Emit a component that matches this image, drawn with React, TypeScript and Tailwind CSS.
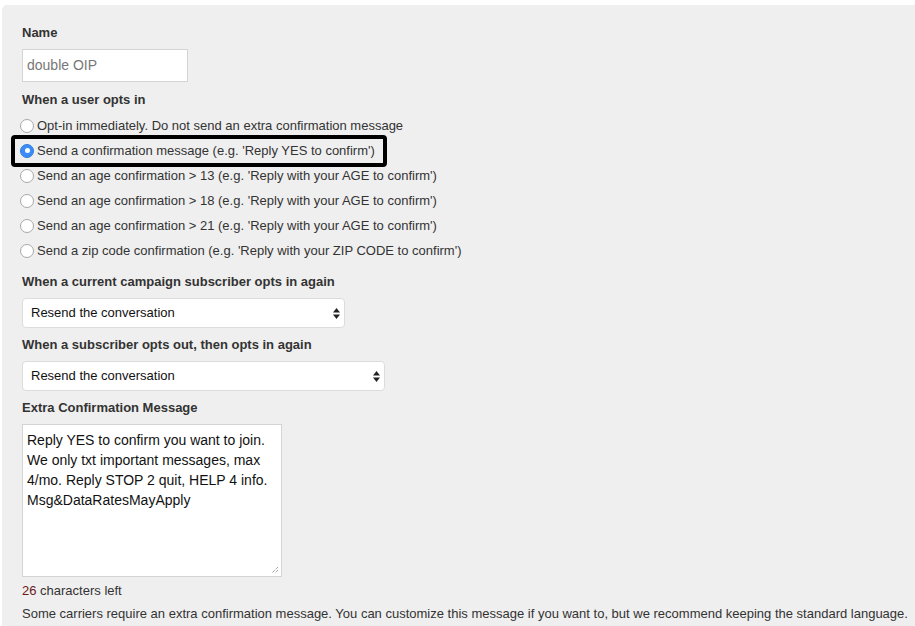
import React from "react";

const options = [
  "Opt-in immediately. Do not send an extra confirmation message",
  "Send a confirmation message (e.g. 'Reply YES to confirm')",
  "Send an age confirmation > 13 (e.g. 'Reply with your AGE to confirm')",
  "Send an age confirmation > 18 (e.g. 'Reply with your AGE to confirm')",
  "Send an age confirmation > 21 (e.g. 'Reply with your AGE to confirm')",
  "Send a zip code confirmation (e.g. 'Reply with your ZIP CODE to confirm')",
];

function Radio({ checked }: { checked: boolean }) {
  return checked ? (
    <span className="w-[14px] h-[14px] rounded-full bg-[#3b8df5] border border-[#2f7de0] flex items-center justify-center shrink-0">
      <span className="w-[5px] h-[5px] rounded-full bg-white" />
    </span>
  ) : (
    <span className="w-[14px] h-[14px] rounded-full bg-white border border-[#a9a9a9] shrink-0" />
  );
}

function SelectBox({ width }: { width: string }) {
  return (
    <div className={`${width} h-[30px] bg-white border border-[#dcdcdc] rounded-[4px] flex items-center justify-between pl-[8px] pr-[4px] text-[13px] text-[#111]`}>
      <span>Resend the conversation</span>
      <svg width="7" height="11" viewBox="0 0 7 11">
        <path d="M3.5 0 L7 4.5 H0 Z" fill="#222" />
        <path d="M3.5 11 L7 6.5 H0 Z" fill="#222" />
      </svg>
    </div>
  );
}

export default function App() {
  return (
    <div className="w-[915px] h-[626px] bg-white pt-[5px] pl-[2px] overflow-hidden" style={{ fontFamily: '"Liberation Sans", Arial, sans-serif' }}>
      <div className="h-[700px] bg-[#efefef] rounded-tl-[5px] pl-[20px] pt-[20px] text-[#333]">
        <div className="text-[13px] font-bold leading-[15px]">Name</div>
        <div className="mt-[9px] w-[166px] h-[33px] bg-white border border-[#d4d4d4] flex items-center pl-[4px] text-[14px] text-[#777]">
          double OIP
        </div>
        <div className="mt-[10px] text-[13px] font-bold leading-[15px]">When a user opts in</div>
        <div className="mt-[6px] flex flex-col">
          {options.map((o, i) => (
            <div key={i} className="h-[25px] flex items-center">
              {i === 1 ? (
                <div className="-ml-[11px] pl-[5px] pr-[8px] h-[32px] border-[4px] border-black rounded-[4px] flex items-center gap-[3px]">
                  <Radio checked />
                  <span className="text-[13px]">{o}</span>
                </div>
              ) : (
                <div className="-ml-[2px] flex items-center gap-[3px]">
                  <Radio checked={false} />
                  <span className="text-[13px]">{o}</span>
                </div>
              )}
            </div>
          ))}
        </div>
        <div className="mt-[11px] text-[13px] font-bold leading-[15px]">When a current campaign subscriber opts in again</div>
        <div className="mt-[9px]">
          <SelectBox width="w-[323px]" />
        </div>
        <div className="mt-[9px] text-[13px] font-bold leading-[15px]">When a subscriber opts out, then opts in again</div>
        <div className="mt-[9px]">
          <SelectBox width="w-[363px]" />
        </div>
        <div className="mt-[9px] text-[13px] font-bold leading-[15px]">Extra Confirmation Message</div>
        <div className="mt-[9px] relative w-[260px] h-[153px] bg-white border border-[#d4d4d4] px-[4px] pt-[5px] text-[14px] leading-[20px] text-[#111]">
          Reply YES to confirm you want to join. We only txt important messages, max 4/mo. Reply STOP 2 quit, HELP 4 info. Msg&amp;DataRatesMayApply
          <svg className="absolute right-[2px] bottom-[2px]" width="9" height="9" viewBox="0 0 9 9">
            <path d="M8 2 L2 8 M8 5 L5 8" stroke="#777" strokeWidth="1" strokeDasharray="1 1" />
          </svg>
        </div>
        <div className="mt-[6px] text-[13px] leading-[15px]">
          <span className="text-[#6b1a1a]">26</span> characters left
        </div>
        <div className="mt-[8px] text-[13px] leading-[15px] whitespace-nowrap">
          Some carriers require an extra confirmation message. You can customize this message if you want to, but we recommend keeping the standard language.
        </div>
      </div>
    </div>
  );
}
